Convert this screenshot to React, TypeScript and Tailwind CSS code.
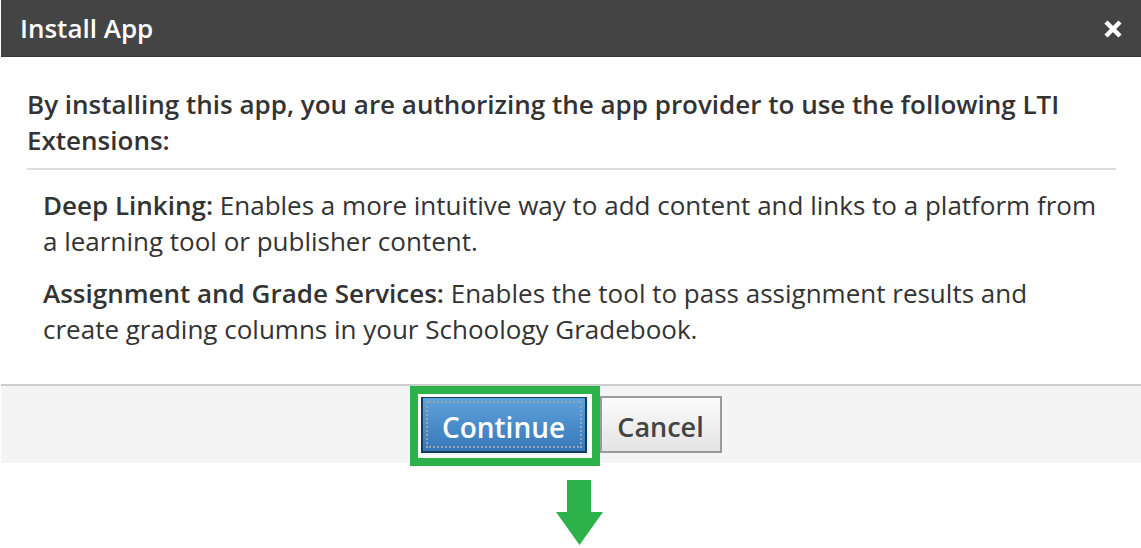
export default function App() {
  return (
    <div className="w-[1141px] h-[548px] bg-white" style={{ fontFamily: '"Open Sans", sans-serif' }}>
      <div className="ml-px">
        <div className="h-[57px] bg-[#444444] border-b border-[#363636] flex items-center justify-between pl-[19px] pr-[18px]">
          <h1 className="text-[26px] font-semibold text-white leading-none">Install App</h1>
          <svg width="20" height="20" viewBox="0 0 20 20" className="mt-px">
            <path d="M3 3 L17 17 M17 3 L3 17" stroke="#fff" strokeWidth="4.5" strokeLinecap="butt" />
          </svg>
        </div>

        <div className="pl-[26px] pr-[25px] pt-[29px] pb-[37px] text-[#333]">
          <p className="text-[26px] leading-[36px] font-semibold">
            By installing this app, you are authorizing the app provider to use the following LTI Extensions:
          </p>
          <div className="mt-[10px] h-[2px] bg-[#dddddd]" />
          <div className="px-[16px] pt-[17px] text-[26px] leading-[36px] flex flex-col gap-[16px]">
            <p>
              <span className="font-semibold">Deep Linking:</span> Enables a more intuitive way to add content and links to a platform from a learning tool or publisher content.
            </p>
            <p>
              <span className="font-semibold">Assignment and Grade Services:</span> Enables the tool to pass assignment results and create grading columns in your Schoology Gradebook.
            </p>
          </div>
        </div>

        <div className="border-t-2 border-[#cccccc] bg-[#f4f4f4] h-[79px] flex items-start justify-center gap-[13px] pt-[10px]">
          <div className="relative">
            <button className="w-[166px] h-[57px] border-2 border-[#0e3d61] bg-gradient-to-b from-[#5ea3dd] to-[#3878b9] p-[3px]">
              <span className="flex h-full w-full items-center justify-center pt-[5px] border-2 border-dotted border-[#9aa4ad] text-[28px] font-semibold text-white">
                Continue
              </span>
            </button>
            <div className="absolute -left-[11px] -top-[10px] w-[190px] h-[80px] border-[8px] border-[#2db24b] pointer-events-none">
              <div className="h-full w-full border-[3px] border-white" />
            </div>
          </div>
          <button className="w-[122px] h-[57px] border-2 border-[#9a9a9a] bg-gradient-to-b from-[#fbfbfb] to-[#e4e4e4] pt-[5px] text-[27px] font-semibold text-[#444]">
            Cancel
          </button>
        </div>

        <div className="flex justify-center pt-[17px] pl-[18px]">
          <svg width="48" height="66" viewBox="0 0 48 66">
            <path d="M11 0 H35 V32 H47 L23.5 65 L0 32 H11 Z" fill="#2db24b" />
          </svg>
        </div>
      </div>
    </div>
  );
}
